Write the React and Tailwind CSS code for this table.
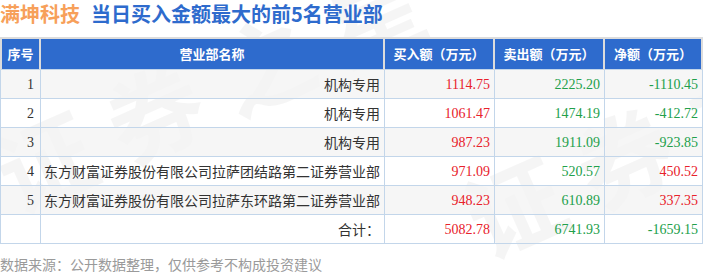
import React from "react";

const cjk = "font-['Microsoft_YaHei','Noto_Sans_CJK_SC',sans-serif]";
const serif = "font-['Liberation_Serif','Noto_Sans_CJK_SC',serif]";

const rows = [
  { no: "1", name: "机构专用", buy: "1114.75", sell: "2225.20", net: "-1110.45" },
  { no: "2", name: "机构专用", buy: "1061.47", sell: "1474.19", net: "-412.72" },
  { no: "3", name: "机构专用", buy: "987.23", sell: "1911.09", net: "-923.85" },
  { no: "4", name: "东方财富证券股份有限公司拉萨团结路第二证券营业部", buy: "971.09", sell: "520.57", net: "450.52" },
  { no: "5", name: "东方财富证券股份有限公司拉萨东环路第二证券营业部", buy: "948.23", sell: "610.89", net: "337.35" },
];

const cols = ["w-[41px]", "w-[344px]", "w-[110px]", "w-[110px]", "w-[98px]"];

function HeadCell({ w, first, children }) {
  return (
    <div
      className={`${w} h-full border-t-2 border-r-2 border-b border-t-[#dcdcdc] border-r-[#dcdcdc] border-b-[#c3d6ea] ${first ? "border-l-2 border-l-[#dcdcdc]" : ""} bg-[#2e6bcd] flex items-center justify-center text-white text-[13px] font-bold`}
    >
      {children}
    </div>
  );
}

function Cell({ w, first, className = "", children }) {
  return (
    <div
      className={`${w} h-full border-r border-b border-[#c3d6ea] ${first ? "border-l" : ""} flex items-center justify-end pr-[4px] text-[14px] ${className}`}
    >
      {children}
    </div>
  );
}

const netColor = (v) => (v.startsWith("-") ? "text-[#22a04b]" : "text-[#e8212b]");

export default function App() {
  return (
    <div className={`w-[703px] h-[274px] bg-white relative overflow-hidden ${cjk}`}>
      {/* Watermark, sits behind the table */}
      <div className="absolute left-[0px] top-[130px] -rotate-[24deg] origin-left text-[96px] font-bold leading-none text-black/[0.04] whitespace-nowrap pointer-events-none tracking-[24px]">
        证券之星
      </div>
      <div className="absolute left-[470px] top-[175px] -rotate-[24deg] origin-left text-[96px] font-bold leading-none text-black/[0.04] whitespace-nowrap pointer-events-none tracking-[24px]">
        证券之星
      </div>

      {/* Title */}
      <div className="relative h-[37px] flex items-start pt-[2px] text-[20px] font-bold leading-[24px]">
        <span className="text-[#f7a05a]">满坤科技</span>
        <span className="ml-[11px] text-[#2e6bcd]">当日买入金额最大的前5名营业部</span>
      </div>

      {/* Table */}
      <div className="relative flex flex-col">
        <div className="flex h-[33px]">
          <HeadCell w={cols[0]} first>序号</HeadCell>
          <HeadCell w={cols[1]}>营业部名称</HeadCell>
          <HeadCell w={cols[2]}>买入额（万元）</HeadCell>
          <HeadCell w={cols[3]}>卖出额（万元）</HeadCell>
          <HeadCell w={cols[4]}>净额（万元）</HeadCell>
        </div>

        {rows.map((r, i) => (
          <div key={r.no} className={`flex h-[29px] ${i % 2 === 0 ? "bg-[#f4f4f4]/80" : "bg-transparent"}`}>
            <Cell w={cols[0]} first className={`${serif} text-[#333] pr-[6px]`}>{r.no}</Cell>
            <Cell w={cols[1]} className="text-[#333] pr-[3px]">{r.name}</Cell>
            <Cell w={cols[2]} className={`${serif} text-[#e8212b]`}>{r.buy}</Cell>
            <Cell w={cols[3]} className={`${serif} text-[#22a04b]`}>{r.sell}</Cell>
            <Cell w={cols[4]} className={`${serif} ${netColor(r.net)}`}>{r.net}</Cell>
          </div>
        ))}

        <div className="flex h-[29px]">
          <Cell w={cols[0]} first />
          <Cell w={cols[1]} className="text-[#333] pr-[3px]">合计：</Cell>
          <Cell w={cols[2]} className={`${serif} text-[#e8212b]`}>5082.78</Cell>
          <Cell w={cols[3]} className={`${serif} text-[#22a04b]`}>6741.93</Cell>
          <Cell w={cols[4]} className={`${serif} text-[#22a04b]`}>-1659.15</Cell>
        </div>
      </div>

      {/* Footer */}
      <div className="relative mt-[10px] text-[14px] leading-[20px] text-[#9a9a9a]">
        数据来源：公开数据整理，仅供参考不构成投资建议
      </div>
    </div>
  );
}
